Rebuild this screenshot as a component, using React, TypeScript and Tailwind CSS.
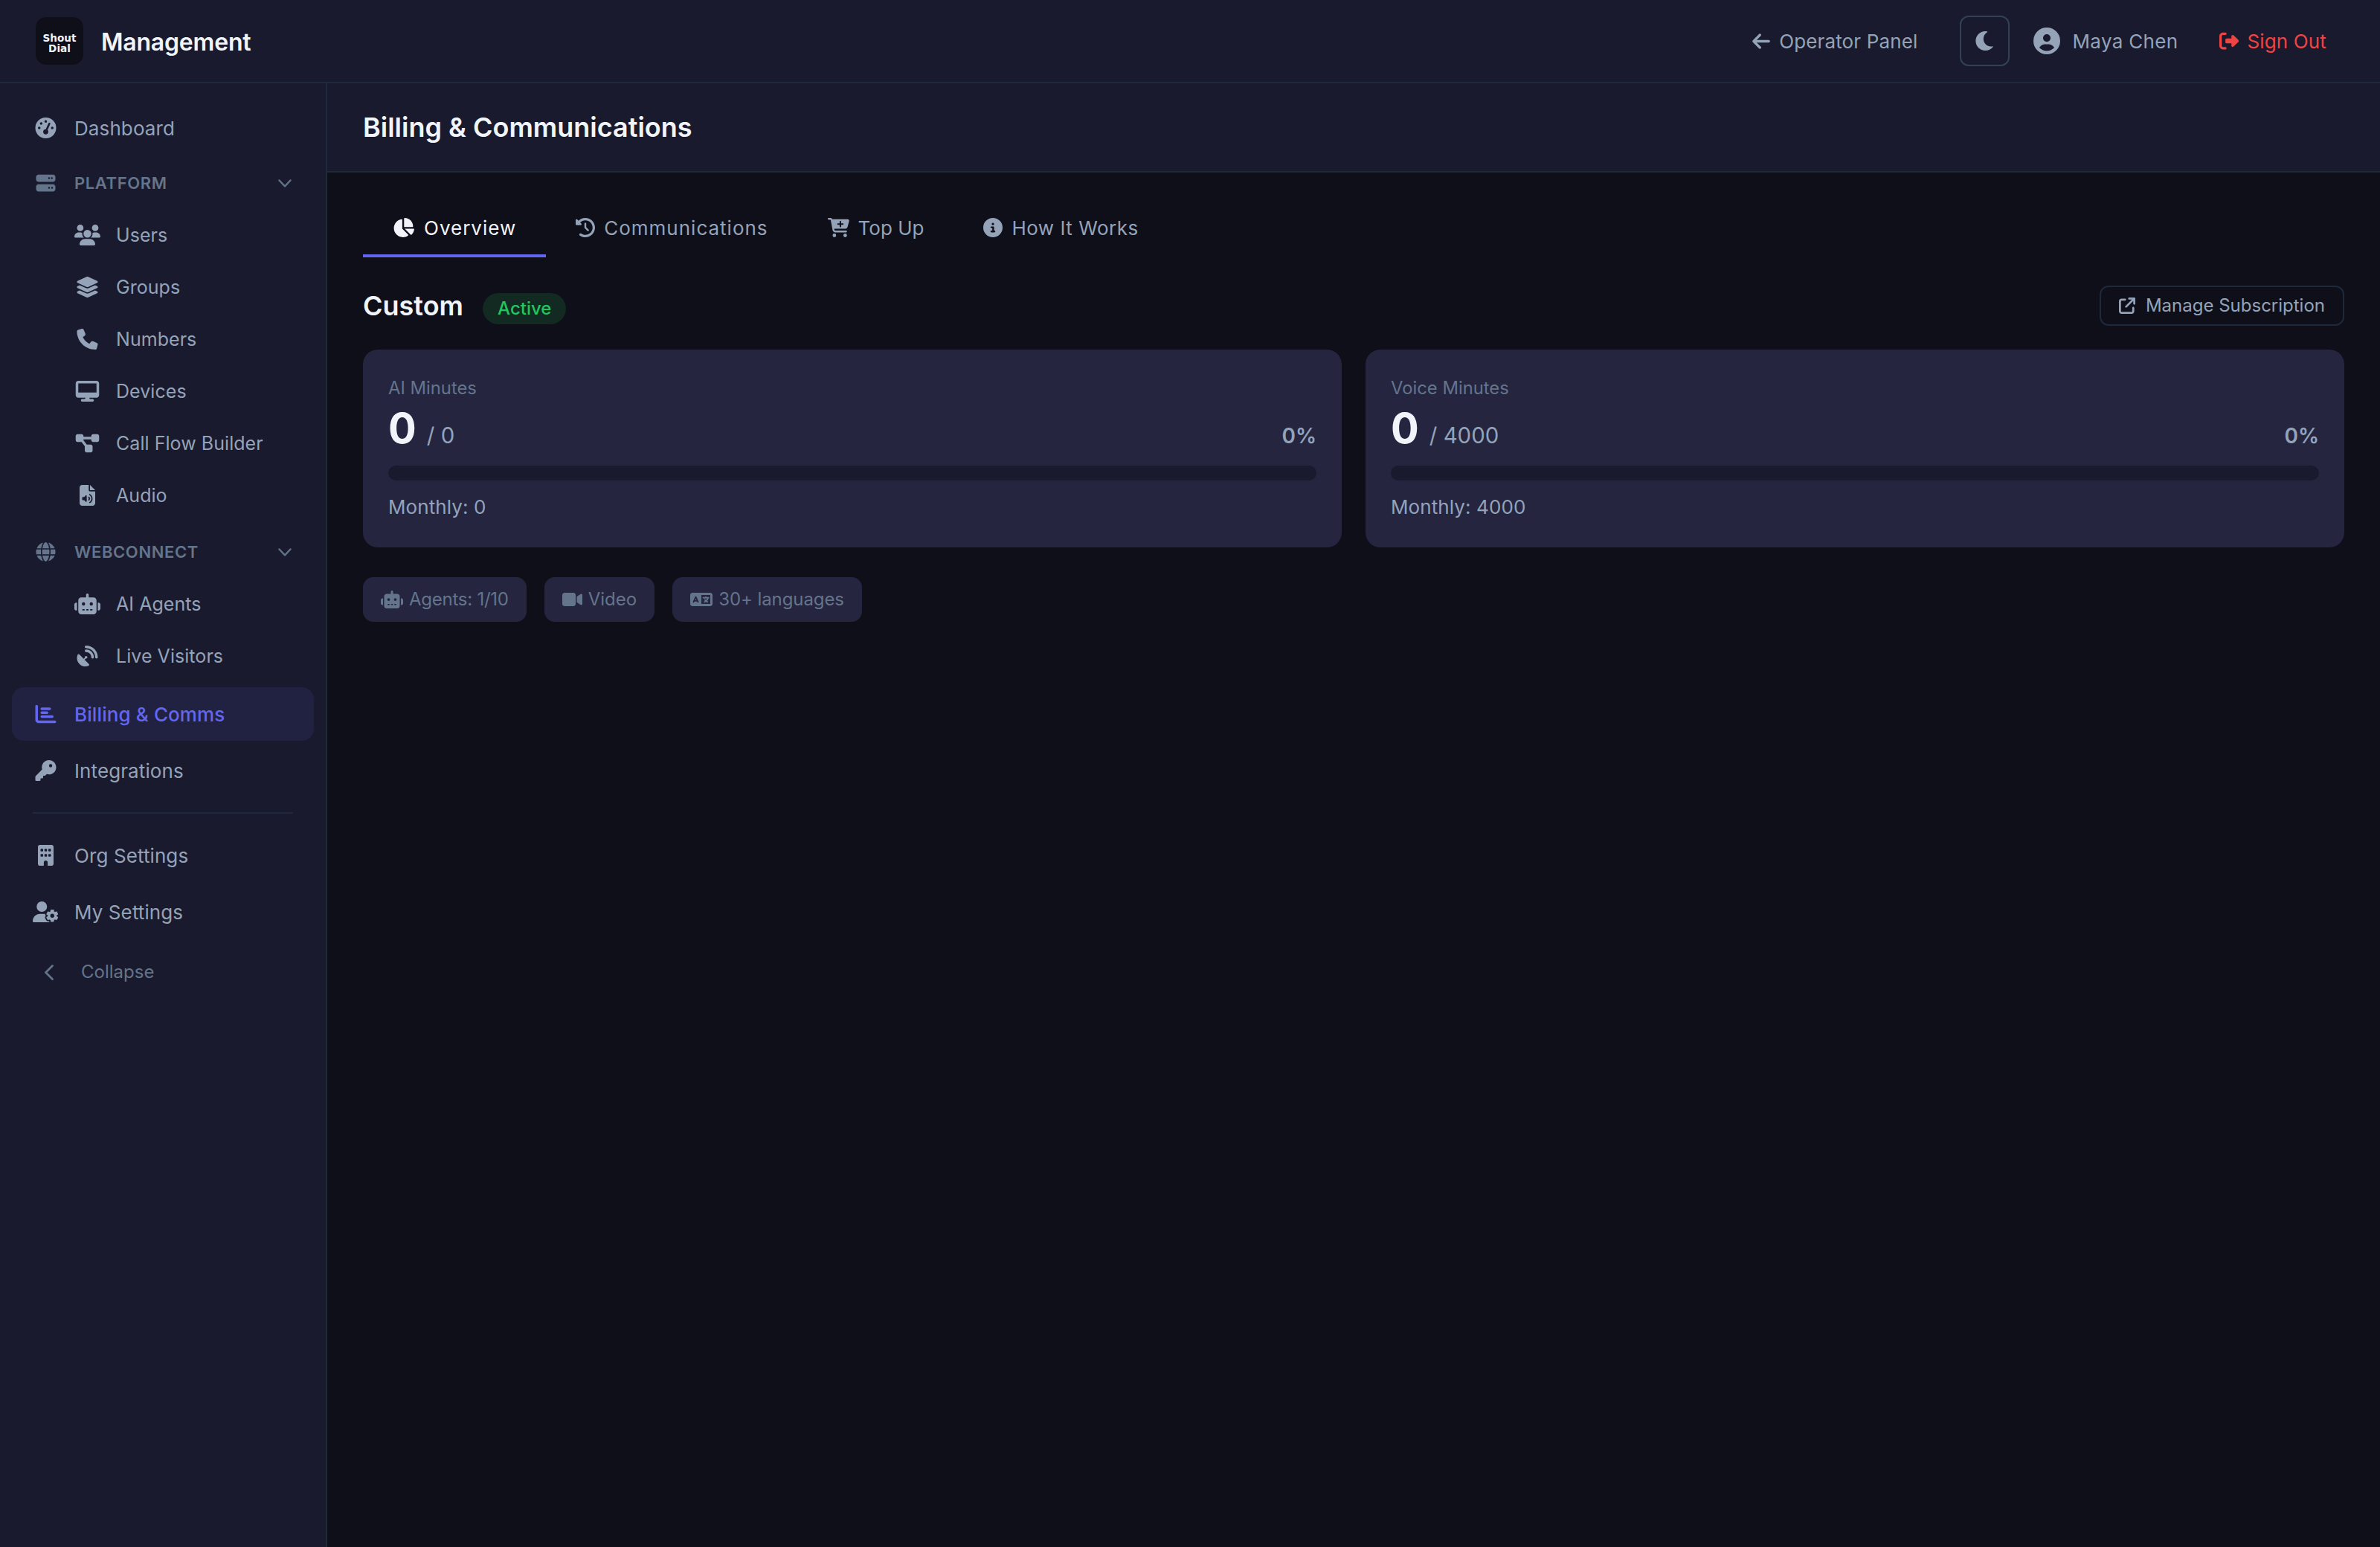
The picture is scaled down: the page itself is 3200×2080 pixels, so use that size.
import React from "react";
import {
  FaGaugeHigh, FaServer, FaUsers, FaLayerGroup, FaPhone, FaDesktop, FaDiagramProject, FaFileAudio,
  FaGlobe, FaRobot, FaSatelliteDish, FaChartBar, FaKey, FaBuilding, FaUserGear, FaChartPie,
  FaClockRotateLeft, FaCartPlus, FaCircleInfo, FaArrowUpRightFromSquare, FaVideo, FaLanguage,
  FaArrowLeft, FaCircleUser, FaRightFromBracket,
} from "react-icons/fa6";
import { FaMoon } from "react-icons/fa";

type IconT = React.ComponentType<{ className?: string }>;

function ChevronDown() {
  return (
    <svg viewBox="0 0 18 11" fill="none" stroke="currentColor" strokeWidth={2.4} strokeLinecap="round" strokeLinejoin="round" className="h-[11px] w-[18px]">
      <polyline points="1.5,1.5 9,9.5 16.5,1.5" />
    </svg>
  );
}

function ChevronLeft() {
  return (
    <svg viewBox="0 0 12 21" fill="none" stroke="currentColor" strokeWidth={2.8} strokeLinecap="round" strokeLinejoin="round" className="h-[21px] w-[12px]">
      <polyline points="10.5,1.5 1.5,10.5 10.5,19.5" />
    </svg>
  );
}

function NavItem({ icon: Icon, label, active }: { icon: IconT; label: string; active?: boolean }) {
  return (
    <div className={`flex h-[72px] items-center gap-[21px] rounded-[16px] pl-[28px] text-[26px] tracking-[0.1px] ${active ? "bg-[#212242] text-[#6366f1] font-medium" : "text-[#94a3b8]"}`}>
      <Icon className="h-[28px] w-[35px]" />
      <span>{label}</span>
    </div>
  );
}

function SubItem({ icon: Icon, label }: { icon: IconT; label: string }) {
  return (
    <div className="flex h-[70px] items-center gap-[21px] pl-[84px] pt-[2px] text-[25px] tracking-[0.05px] text-[#94a3b8]">
      <Icon className="h-[28px] w-[35px]" />
      <span className="pt-[2px]">{label}</span>
    </div>
  );
}

function Section({ icon: Icon, label }: { icon: IconT; label: string }) {
  return (
    <div className="flex h-[68px] items-center gap-[21px] pl-[28px] pr-[30px] text-[#64748b]">
      <Icon className="h-[26px] w-[35px]" />
      <span className="flex-1 text-[22px] font-semibold tracking-[0.6px]">{label}</span>
      <ChevronDown />
    </div>
  );
}

function Sidebar() {
  return (
    <aside className="flex w-[440px] shrink-0 flex-col border-r-2 border-[#1e293b] bg-[#1a1a2e] px-[16px] pt-[24px]">
      <div className="mb-[4px]"><NavItem icon={FaGaugeHigh} label="Dashboard" /></div>
      <div className="mb-[8px]">
        <Section icon={FaServer} label="PLATFORM" />
        <SubItem icon={FaUsers} label="Users" />
        <SubItem icon={FaLayerGroup} label="Groups" />
        <SubItem icon={FaPhone} label="Numbers" />
        <SubItem icon={FaDesktop} label="Devices" />
        <SubItem icon={FaDiagramProject} label="Call Flow Builder" />
        <SubItem icon={FaFileAudio} label="Audio" />
      </div>
      <div className="mb-[8px]">
        <Section icon={FaGlobe} label="WEBCONNECT" />
        <SubItem icon={FaRobot} label="AI Agents" />
        <SubItem icon={FaSatelliteDish} label="Live Visitors" />
      </div>
      <div className="flex flex-col gap-[4px]">
        <NavItem icon={FaChartBar} label="Billing & Comms" active />
        <NavItem icon={FaKey} label="Integrations" />
      </div>
      <div className="mx-[28px] my-[20px] h-[2px] bg-[#1e293b]" />
      <div className="flex flex-col gap-[4px]">
        <NavItem icon={FaBuilding} label="Org Settings" />
        <NavItem icon={FaUserGear} label="My Settings" />
      </div>
      <div className="mt-[10px] flex h-[70px] items-center gap-[37px] pl-[44px] text-[24px] text-[#64748b]">
        <ChevronLeft />
        <span>Collapse</span>
      </div>
    </aside>
  );
}

function TopBar() {
  return (
    <header className="flex h-[112px] items-center border-b-2 border-[#1e293b] bg-[#1a1a2e] pl-[48px] pr-[48px]">
      <div className="flex h-[64px] w-[64px] flex-col items-center justify-center rounded-[14px] bg-[#0f0f1a] pt-[5px] font-['DejaVu_Sans',sans-serif] text-[13.6px] font-bold leading-[14px] text-[#f1f5f9]">
        <span>Shout</span>
        <span>Dial</span>
      </div>
      <span className="ml-[24px] flex-1 pt-[3px] text-[32px] font-semibold tracking-[-0.2px] text-[#f1f5f9]">Management</span>
      <div className="flex items-center gap-[12px] pr-[24px] text-[26px] tracking-[0.15px] text-[#94a3b8]">
        <FaArrowLeft className="h-[27px] w-[24px]" />
        <span>Operator Panel</span>
      </div>
      <div className="ml-[32px] flex h-[68px] w-[67px] items-center justify-center rounded-[12px] border-2 border-[#334155] text-[#94a3b8]">
        <FaMoon className="h-[26px] w-[26px]" />
      </div>
      <div className="ml-[32px] flex items-center gap-[17px] text-[26px] tracking-[0.33px] text-[#94a3b8]">
        <FaCircleUser className="h-[36px] w-[36px]" />
        <span>Maya Chen</span>
      </div>
      <div className="ml-[55px] flex items-center gap-[12px] pr-[24px] text-[26px] tracking-[0.14px] text-[#ef4444]">
        <FaRightFromBracket className="h-[26px] w-[26px]" />
        <span>Sign Out</span>
      </div>
    </header>
  );
}

function Tab({ icon: Icon, iconClass, label, textClass, active }: { icon: IconT; iconClass: string; label: string; textClass: string; active?: boolean }) {
  return (
    <div className={`flex h-[80px] items-center gap-[12px] border-b-4 px-[40px] pt-[4px] text-[26px] ${active ? "border-[#6366f1] text-[#f1f5f9]" : "border-transparent text-[#94a3b8]"}`}>
      <Icon className={iconClass} />
      <span className={textClass}>{label}</span>
    </div>
  );
}

function Card({ label, total, monthly }: { label: string; total: string; monthly: string }) {
  return (
    <div className="flex h-[266px] flex-col rounded-[20px] bg-[#252540] px-[34px] pt-[36px]">
      <div className="text-[23.8px] leading-[32px] text-[#64748b]">{label}</div>
      <div className="mt-[2px] flex items-baseline justify-between">
        <div className="flex items-baseline gap-[14px]">
          <span className="text-[56px] font-bold leading-[72px] text-[#f1f5f9]">0</span>
          <span className="text-[29.4px] text-[#94a3b8]">/ {total}</span>
        </div>
        <span className="text-[28px] font-semibold text-[#94a3b8]">0%</span>
      </div>
      <div className="mt-[14px] h-[20px] rounded-[10px] bg-[#1a1a2e]" />
      <div className="mt-[20px] text-[26px] leading-[32px] tracking-[0.1px] text-[#94a3b8]">Monthly: {monthly}</div>
    </div>
  );
}

function Chip({ icon: Icon, iconClass, label, textClass }: { icon: IconT; iconClass: string; label: string; textClass: string }) {
  return (
    <div className="flex h-[60px] items-center gap-[8px] rounded-[14px] bg-[#252540] px-[24px] text-[24px] text-[#64748b]">
      <Icon className={iconClass} />
      <span className={textClass}>{label}</span>
    </div>
  );
}

export default function App() {
  return (
    <div className="flex h-[2080px] w-[3200px] flex-col overflow-hidden bg-[#0f0f1a] font-['Inter',sans-serif]">
      <TopBar />
      <div className="flex min-h-0 flex-1">
        <Sidebar />
        <main className="flex min-w-0 flex-1 flex-col">
          <div className="flex h-[120px] items-center border-b-2 border-[#1e293b] bg-[#1a1a2e] px-[48px]">
            <h1 className="text-[36px] font-semibold text-[#f1f5f9]">Billing &amp; Communications</h1>
          </div>
          <div className="px-[48px] pt-[34px]">
            <div className="flex">
              <Tab icon={FaChartPie} iconClass="h-[26px] w-[29px]" label="Overview" textClass="ml-[1px] tracking-[1px]" active />
              <Tab icon={FaClockRotateLeft} iconClass="h-[26px] w-[26px]" label="Communications" textClass="tracking-[1px]" />
              <Tab icon={FaCartPlus} iconClass="h-[26px] w-[29px]" label="Top Up" textClass="tracking-[0px]" />
              <Tab icon={FaCircleInfo} iconClass="h-[26px] w-[26px]" label="How It Works" textClass="tracking-[0.5px]" />
            </div>
            <div className="mt-[38px] flex h-[54px] items-center">
              <span className="text-[36px] font-semibold text-[#f1f5f9]">Custom</span>
              <span className="ml-[26px] mt-[8px] flex h-[42px] items-center rounded-full bg-[#122a22] px-[20px] text-[24px] font-medium text-[#22c55e]">Active</span>
              <div className="ml-auto flex h-[54px] items-center gap-[14px] rounded-[12px] border-2 border-[#1e293b] px-[24px] text-[24px] text-[#94a3b8]">
                <FaArrowUpRightFromSquare className="h-[22px] w-[22px]" />
                <span>Manage Subscription</span>
              </div>
            </div>
            <div className="mt-[32px] grid grid-cols-2 gap-[32px]">
              <Card label="AI Minutes" total="0" monthly="0" />
              <Card label="Voice Minutes" total="4000" monthly="4000" />
            </div>
            <div className="mt-[40px] flex gap-[24px]">
              <Chip icon={FaRobot} iconClass="h-[24px] w-[30px]" label="Agents: 1/10" textClass="tracking-[-0.25px]" />
              <Chip icon={FaVideo} iconClass="h-[24px] w-[27px]" label="Video" textClass="tracking-[0px]" />
              <Chip icon={FaLanguage} iconClass="h-[24px] w-[30px]" label="30+ languages" textClass="tracking-[-0.08px]" />
            </div>
          </div>
        </main>
      </div>
    </div>
  );
}
